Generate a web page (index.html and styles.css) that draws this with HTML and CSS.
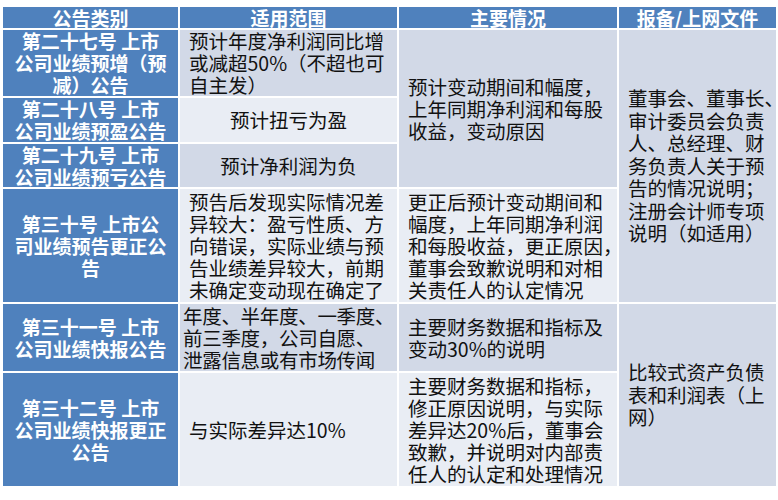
FILE: index.html
```html
<!DOCTYPE html>
<html lang="zh-CN">
<head>
<meta charset="utf-8">
<title>业绩预告与快报</title>
<link rel="stylesheet" href="styles.css">
</head>
<body>
<div class="sheet">
  <div class="head">公告类别</div>
  <div class="head">适用范围</div>
  <div class="head">主要情况</div>
  <div class="head">报备/上网文件</div>

  <div class="kind">第二十七号 上市<br>公司业绩预增（预<br>减）公告</div>
  <div class="cell dark left">预计年度净利润同比增<br>或减超50%（不超也可<br>自主发）</div>
  <div class="cell dark left span3">预计变动期间和幅度，<br>上年同期净利润和每股<br>收益，变动原因</div>
  <div class="cell dark left span4 col4">董事会、董事长、<br>审计委员会负责<br>人、总经理、财<br>务负责人关于预<br>告的情况说明；<br>注册会计师专项<br>说明（如适用）</div>

  <div class="kind">第二十八号 上市<br>公司业绩预盈公告</div>
  <div class="cell light center">预计扭亏为盈</div>

  <div class="kind">第二十九号 上市<br>公司业绩预亏公告</div>
  <div class="cell dark center">预计净利润为负</div>

  <div class="kind">第三十号 上市公<br>司业绩预告更正公<br>告</div>
  <div class="cell light left">预告后发现实际情况差<br>异较大：盈亏性质、方<br>向错误，实际业绩与预<br>告业绩差异较大，前期<br>未确定变动现在确定了</div>
  <div class="cell light left">更正后预计变动期间和<br>幅度，上年同期净利润<br>和每股收益，更正原因，<br>董事会致歉说明和对相<br>关责任人的认定情况</div>

  <div class="kind">第三十一号 上市<br>公司业绩快报公告</div>
  <div class="cell dark left tight">年度、半年度、一季度、<br>前三季度，公司自愿、<br>泄露信息或有市场传闻</div>
  <div class="cell dark left">主要财务数据和指标及<br>变动30%的说明</div>
  <div class="cell dark left span2 col4">比较式资产负债<br>表和利润表（上<br>网）</div>

  <div class="kind">第三十二号 上市<br>公司业绩快报更正<br>公告</div>
  <div class="cell light left">与实际差异达10%</div>
  <div class="cell light left">主要财务数据和指标，<br>修正原因说明，与实际<br>差异达20%后，董事会<br>致歉，并说明对内部责<br>任人的认定和处理情况</div>
</div>
</body>
</html>
```

FILE: styles.css
```css
html, body {
  margin: 0;
  padding: 0;
  background: #ffffff;
}

body {
  padding: 7px 2px 0 3px;
  font-family: "Noto Sans CJK SC", "Noto Sans", sans-serif;
}

.sheet {
  display: grid;
  grid-template-columns: 175px 217px 218px 157px;
  grid-template-rows: 21px 66px 44px 43px 113px 67px 113px;
  gap: 2px;
  width: 773px;
}

.head {
  background: #4f81bd;
  color: #ffffff;
  font-weight: bold;
  font-size: 19px;
  line-height: 21px;
  text-align: center;
  white-space: nowrap;
  display: flex;
  align-items: center;
  justify-content: center;
}

.kind {
  background: #4f81bd;
  color: #ffffff;
  font-weight: bold;
  font-size: 19px;
  line-height: 22px;
  text-align: center;
  display: flex;
  align-items: center;
  justify-content: center;
  white-space: nowrap;
}

.cell {
  color: #111111;
  font-size: 19.5px;
  line-height: 22px;
  display: flex;
  align-items: center;
  white-space: nowrap;
  padding: 0 6px 0 9px;
}

.dark {
  background: #d2d9e7;
}

.light {
  background: #e9edf4;
}

.left {
  justify-content: flex-start;
}

.center {
  justify-content: center;
  padding: 0;
}

.tight {
  padding-left: 3px;
  letter-spacing: -0.3px;
}

.col4 {
  padding-left: 9px;
  line-height: 22.5px;
}

.span2 {
  grid-row: span 2;
}

.span3 {
  grid-row: span 3;
}

.span4 {
  grid-row: span 4;
}
```
